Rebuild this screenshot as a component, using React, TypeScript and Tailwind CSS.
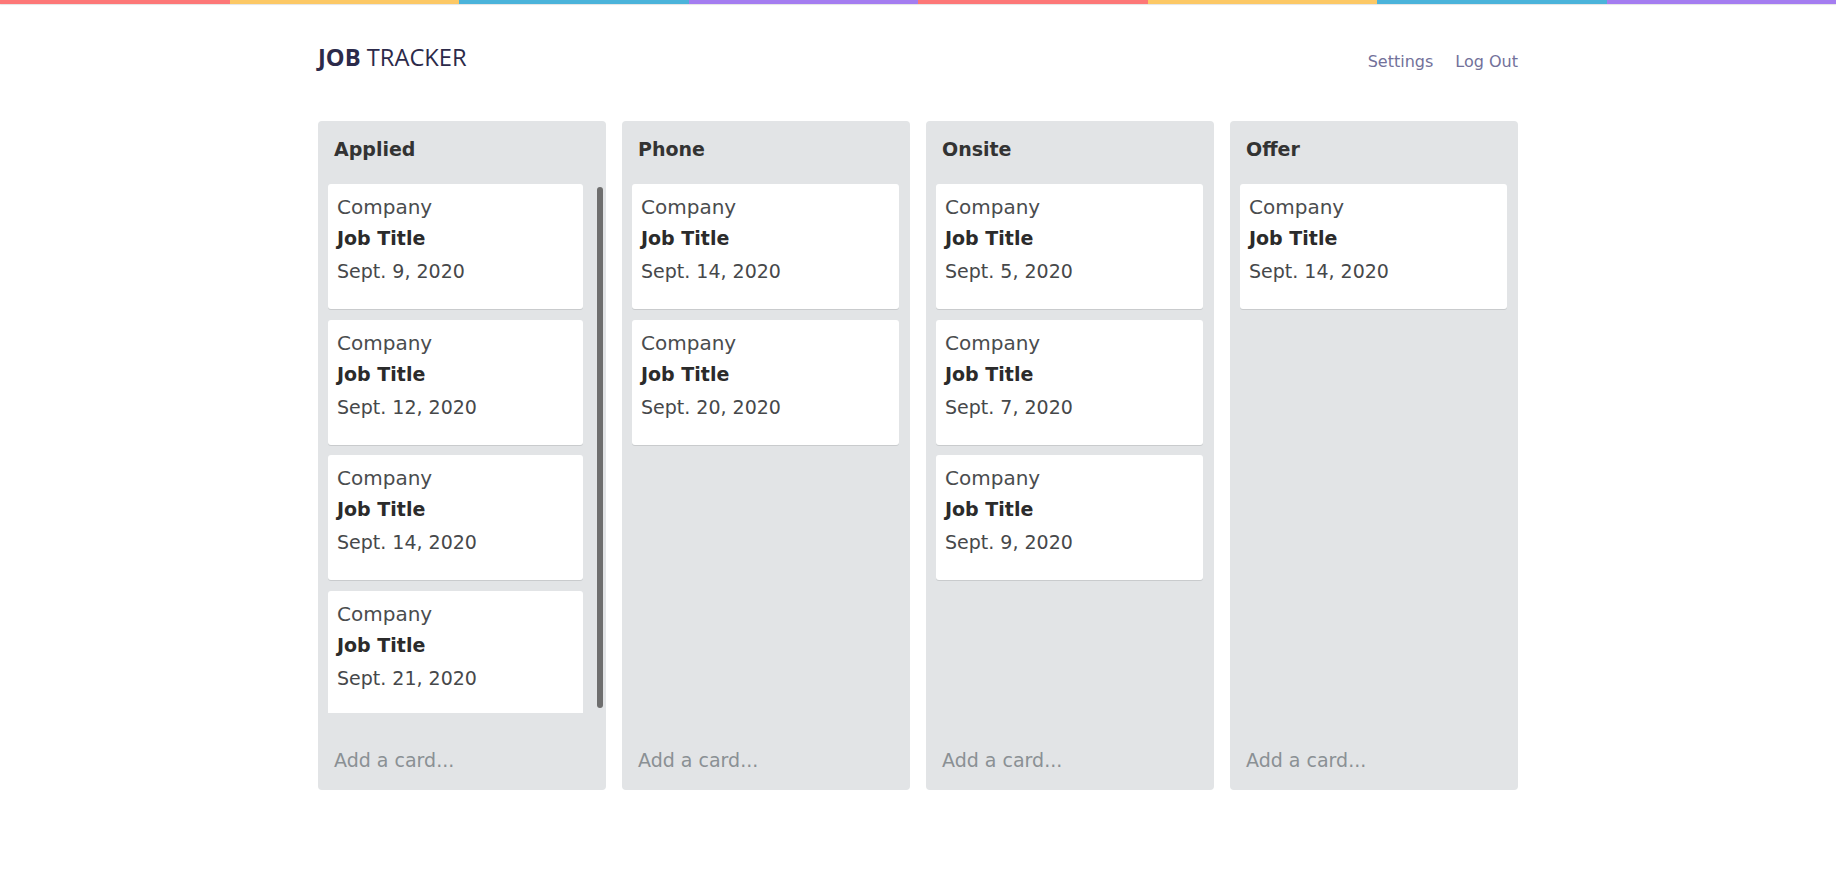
import type { ReactNode } from "react";

type Job = { company: string; title: string; date: string };

const columns: { name: string; jobs: Job[]; scroll?: boolean }[] = [
  {
    name: "Applied",
    scroll: true,
    jobs: [
      { company: "Company", title: "Job Title", date: "Sept. 9, 2020" },
      { company: "Company", title: "Job Title", date: "Sept. 12, 2020" },
      { company: "Company", title: "Job Title", date: "Sept. 14, 2020" },
      { company: "Company", title: "Job Title", date: "Sept. 21, 2020" },
    ],
  },
  {
    name: "Phone",
    jobs: [
      { company: "Company", title: "Job Title", date: "Sept. 14, 2020" },
      { company: "Company", title: "Job Title", date: "Sept. 20, 2020" },
    ],
  },
  {
    name: "Onsite",
    jobs: [
      { company: "Company", title: "Job Title", date: "Sept. 5, 2020" },
      { company: "Company", title: "Job Title", date: "Sept. 7, 2020" },
      { company: "Company", title: "Job Title", date: "Sept. 9, 2020" },
    ],
  },
  {
    name: "Offer",
    jobs: [{ company: "Company", title: "Job Title", date: "Sept. 14, 2020" }],
  },
];

const stripe = ["bg-[#fd7777]", "bg-[#fcc865]", "bg-[#4bb3da]", "bg-[#a47df0]"];

function Card({ job }: { job: Job }) {
  return (
    <div className="h-[125px] shrink-0 rounded-[3px] bg-white px-[9px] pt-[7px] shadow-[0_1px_0_#c9cbcd]">
      <div className="text-[20px] leading-[32px] text-[#4a4c4e]">{job.company}</div>
      <div className="font-bold leading-[31px] text-[#2b2b2b]">{job.title}</div>
      <div className="leading-[35px] text-[#46484a]">{job.date}</div>
    </div>
  );
}

function Column({ name, children, scroll }: { name: string; children: ReactNode; scroll?: boolean }) {
  return (
    <div className="flex h-[669px] w-[288px] flex-col rounded-[4px] bg-[#e2e4e6]">
      <div className="px-[16px] pt-[14px] pb-[21px] font-bold leading-[28px] text-[#333333]">{name}</div>
      <div className={`flex min-h-0 flex-1 overflow-hidden pl-[10px] ${scroll ? "" : "pr-[11px]"}`}>
        <div className="flex flex-1 flex-col gap-[10.5px] overflow-hidden">{children}</div>
        {scroll && (
          <div className="flex w-[23px] shrink-0 pl-[14px] pr-[3px] pt-[3px] pb-[5px]">
            <div className="w-[6px] rounded-full bg-[#6e6e6e]"></div>
          </div>
        )}
      </div>
      <div className="px-[16px] pt-[33px] pb-[16px] leading-[28px] text-[#8a9094]">Add a card...</div>
    </div>
  );
}

export default function App() {
  return (
    <div className="min-h-[871px] bg-white font-['DejaVu_Sans',sans-serif] text-[19px]">
      <div className="flex h-[4px] shadow-[0_1px_1px_#e4e4e4]">
        {[0, 1].flatMap(r => stripe.map((c, i) => <div key={`${r}-${i}`} className={`flex-1 ${c}`}></div>))}
      </div>
      <div className="mx-auto w-[1200px]">
        <header className="flex h-[117px] items-start justify-between pt-[38px]">
          <div className="font-['Open_Sans',sans-serif] text-[23.7px] leading-[30px] text-[#2c2a4a]">
            <span className="font-bold">JOB</span> TRACKER
          </div>
          <nav className="mt-[8px] flex gap-[22px] text-[16px] leading-[24px] text-[#72719a]">
            <a href="#">Settings</a>
            <a href="#">Log Out</a>
          </nav>
        </header>
        <main className="flex gap-[16px]">
          {columns.map(col => (
            <Column key={col.name} name={col.name} scroll={col.scroll}>
              {col.jobs.map((job, i) => (
                <Card key={i} job={job} />
              ))}
            </Column>
          ))}
        </main>
      </div>
    </div>
  );
}
